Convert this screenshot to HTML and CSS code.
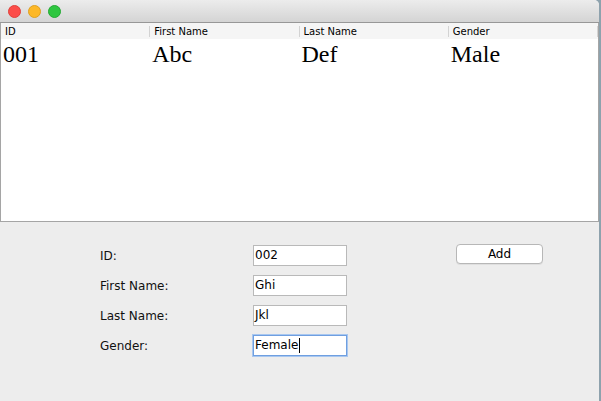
FILE: index.html
```html
<!DOCTYPE html>
<html>
<head>
<meta charset="utf-8">
<link rel="stylesheet" href="styles.css">
</head>
<body>
<div class="window">
  <div class="titlebar">
    <span class="light red"></span>
    <span class="light yellow"></span>
    <span class="light green"></span>
  </div>
  <div class="table-pane">
    <div class="thead">
      <div class="th">ID</div>
      <div class="th">First Name</div>
      <div class="th">Last Name</div>
      <div class="th">Gender</div>
    </div>
    <div class="tbody">
      <div class="tr">
        <div class="td">001</div>
        <div class="td">Abc</div>
        <div class="td">Def</div>
        <div class="td">Male</div>
      </div>
    </div>
  </div>
  <div class="panel">
    <div class="form">
      <div class="label">ID:</div>
      <div class="field">002</div>
      <div class="button">Add</div>
      <div class="label">First Name:</div>
      <div class="field">Ghi</div>
      <div></div>
      <div class="label">Last Name:</div>
      <div class="field">Jkl</div>
      <div></div>
      <div class="label">Gender:</div>
      <div class="field focused">Female<span class="caret"></span></div>
      <div></div>
    </div>
  </div>
</div>
</body>
</html>
```

FILE: styles.css
```css
html, body {
  margin: 0;
  padding: 0;
  height: 401px;
  overflow: hidden;
}
body {
  background: #8ea2ad;
  font-family: "DejaVu Sans", "Liberation Sans", sans-serif;
  color: #000;
}
.window {
  width: 599px;
  height: 401px;
  background: #ededed;
  border-top-right-radius: 5px;
  overflow: hidden;
  display: flex;
  flex-direction: column;
}
.titlebar {
  flex: none;
  box-sizing: content-box;
  height: 21px;
  padding-top: 1px;
  padding-left: 8px;
  background: linear-gradient(#ececec, #d4d4d4);
  border-bottom: 1px solid #979797;
  display: flex;
  align-items: center;
  gap: 7px;
}
.light {
  width: 13px;
  height: 13px;
  border-radius: 50%;
  box-sizing: border-box;
}
.red { background: #fc4d49; border: 1px solid #e0403a; }
.yellow { background: #fdb827; border: 1px solid #dfa020; }
.green { background: #2ec640; border: 1px solid #24a833; }

.table-pane {
  flex: none;
  height: 198px;
  border: 1px solid #a5a5a5;
  border-top: none;
  background: #fff;
  display: flex;
  flex-direction: column;
}
.thead {
  height: 16px;
  background: #f5f5f5;
  display: grid;
  grid-template-columns: repeat(4, 1fr);
}
.th {
  font-size: 10px;
  line-height: 14px;
  padding: 2px 0 0 4px;
  background: linear-gradient(#d3d3d3, #d3d3d3) right 3px / 1px 11px no-repeat;
}
.tr {
  display: grid;
  grid-template-columns: repeat(4, 1fr);
  padding-top: 1px;
}
.td {
  font-family: "Liberation Serif", "Times New Roman", serif;
  font-size: 24px;
  line-height: 28px;
  padding-left: 2px;
}

.panel {
  flex: 1;
  padding-top: 23px;
}
.form {
  display: grid;
  grid-template-columns: 153px 94px 196px;
  grid-auto-rows: 21px;
  row-gap: 9px;
  padding-left: 100px;
}
.label {
  font-size: 12px;
  line-height: 21px;
  padding-top: 1px;
  color: #111;
}
.field {
  box-sizing: border-box;
  height: 21px;
  background: #fff;
  border: 1px solid #b9b9b9;
  font-size: 12px;
  line-height: 19px;
  padding-left: 1px;
  display: flex;
  align-items: center;
}
.field.focused {
  border-color: #6f9fe0;
  box-shadow: 0 0 0 1px #a8c7f0;
}
.caret {
  display: inline-block;
  width: 1px;
  height: 15px;
  background: #000;
  margin-left: 1px;
}
.button {
  box-sizing: border-box;
  width: 87px;
  height: 20px;
  margin-left: 109px;
  margin-top: -1px;
  background: #fff;
  border: 1px solid #b7b7b7;
  border-radius: 4px;
  box-shadow: 0 1px 0 rgba(0,0,0,0.06);
  font-size: 12px;
  line-height: 19px;
  text-align: center;
}
```
